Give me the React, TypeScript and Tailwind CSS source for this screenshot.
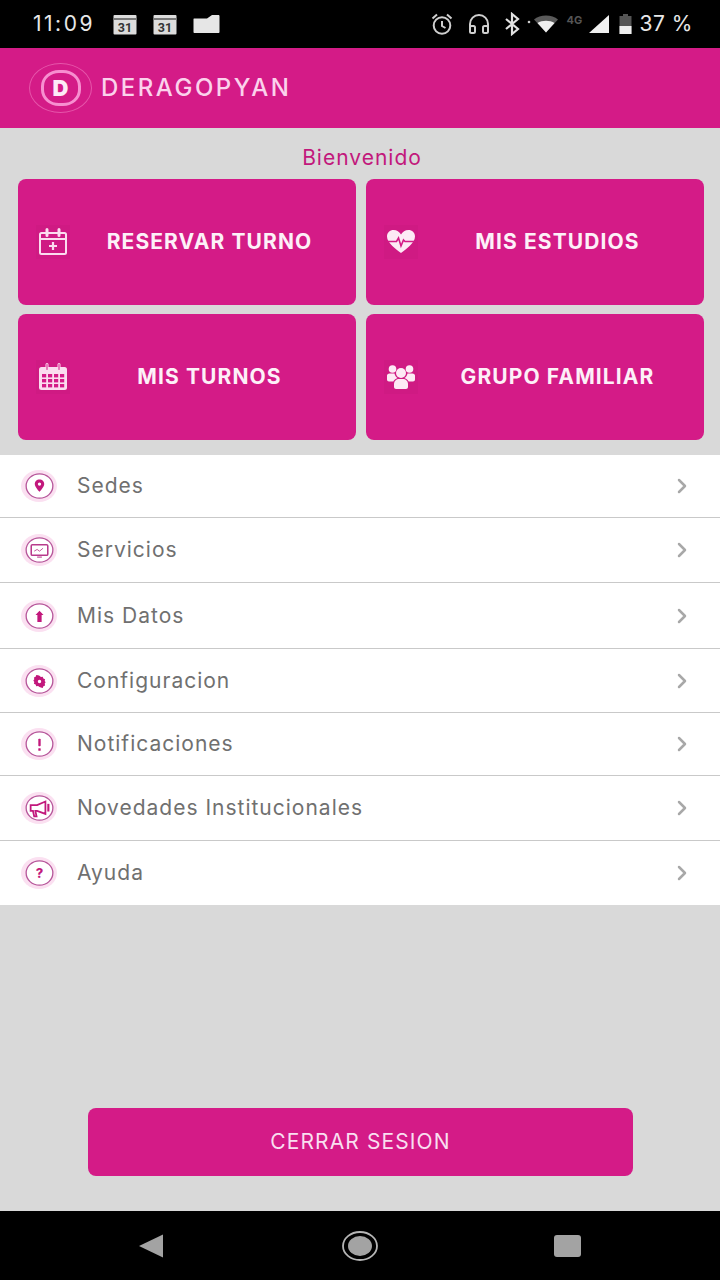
import type { ReactNode } from "react";
import { ChevronRight } from "lucide-react";

const PINK = "#d41b87";

function CalendarPlus() {
  return (
    <svg width="30" height="28" viewBox="0 0 30 28" fill="none" stroke="#fbdcef" strokeWidth="2">
      <rect x="2" y="5" width="26" height="21" rx="1.5" />
      <path d="M2 11h26" />
      <path d="M9 1.500v6M21 1.500v6" strokeWidth="3" strokeLinecap="round" />
      <path d="M15 14v8M11 18h8" strokeWidth="2.2" />
    </svg>
  );
}

function CalendarGrid() {
  return (
    <svg width="30" height="28" viewBox="0 0 30 28" fill="none">
      <rect x="1" y="4" width="28" height="23" rx="2.5" fill="#fbdcef" />
      <path d="M9 1.500v5M21 1.500v5" stroke="#fbdcef" strokeWidth="3" strokeLinecap="round" />
      <path d="M9 1.500v5M21 1.500v5" stroke={PINK} strokeWidth="1" strokeLinecap="round" />
      <g fill={PINK}>
        {[11, 16, 21].map((y) =>
          [4, 10, 16, 22].map((x) => <rect key={`${x}-${y}`} x={x} y={y} width="4.2" height="3.4" />),
        )}
      </g>
    </svg>
  );
}

function HeartPulse() {
  return (
    <svg width="30" height="26" viewBox="0 0 30 26">
      <path
        d="M15 24C10 20 1 14 1 7.500 1 3.500 4 1 7.500 1 10.800 1 13.500 3 15 5.500 16.500 3 19.200 1 22.500 1 26 1 29 3.500 29 7.500 29 14 20 20 15 24Z"
        fill="#fdeaf5"
      />
      <path d="M1 12.500h9.500l2-3.500 2.500 8 2.500-6 1.500 1.500H29" fill="none" stroke={PINK} strokeWidth="1.600" />
    </svg>
  );
}

function Group() {
  return (
    <svg width="30" height="26" viewBox="0 0 30 26" fill="#fdeaf5">
      <circle cx="6.500" cy="5" r="3.800" />
      <circle cx="23.500" cy="5" r="3.800" />
      <circle cx="15" cy="9" r="5" />
      <path d="M1 11.500c0-1 1-2 2.500-2h5c.5 2 1.500 3.500 3 4.500-2 .8-3.500 2-4.200 3.500H3c-1.200 0-2-.8-2-2Z" />
      <path d="M29 11.500c0-1-1-2-2.500-2h-5c-.5 2-1.500 3.500-3 4.500 2 .8 3.500 2 4.200 3.500H27c1.200 0 2-.8 2-2Z" />
      <path d="M8 20c0-3 2.500-5 5-5h4c2.500 0 5 2 5 5v3c0 1-1 2-2 2H10c-1 0-2-1-2-2Z" />
    </svg>
  );
}

function ActionButton({ icon, label }: { icon: ReactNode; label: string }) {
  return (
    <div className="relative flex h-[126px] items-center justify-center rounded-lg bg-[#d41b87] pl-[45px]">
      <span className="absolute left-[18px] flex h-[34px] w-[34px] items-center justify-center bg-[#cf1a83]">{icon}</span>
      <span className="text-[21px] font-bold tracking-[1.100px] text-[#fdf0f8]">{label}</span>
    </div>
  );
}

const itemIcons: Record<string, ReactNode> = {
  sedes: (
    <path d="M12 5.500c-2.400 0-4 1.800-4 3.900 0 2.600 4 6.600 4 6.600s4-4 4-6.600c0-2.100-1.600-3.900-4-3.900Zm0 5.300a1.400 1.400 0 1 1 0-2.800 1.400 1.400 0 0 1 0 2.800Z" fill="#c2187c" fillRule="evenodd" />
  ),
  servicios: (
    <g fill="none" stroke="#b83a8c">
      <rect x="5" y="6.500" width="14" height="9" rx="1" strokeWidth="1.300" />
      <path d="M7.500 12l2.500-1.500 2 1.500 3-2.500" strokeWidth="0.700" />
      <path d="M10 17h4" strokeWidth="0.900" />
    </g>
  ),
  datos: <path d="M12 6.500l3.400 3.700h-1.600V16h-3.600v-5.800H8.600Z" fill="#c2187c" />,
  config: (
    <path d="M12 6.200l1.500 1.200 1.900-.3.700 1.800 1.800.8-.4 1.900 1 1.400-1 1.400.4 1.900-1.800.8-.7 1.800-1.900-.3L12 18l-1.500-1.200-1.900.3-.7-1.800-1.800-.8.4-1.900-1-1.400 1-1.400-.4-1.900 1.800-.8.7-1.800 1.900.3Zm0 4.100a1.800 1.800 0 1 0 0 3.600 1.800 1.800 0 0 0 0-3.600Z" fill="#c2187c" fillRule="evenodd" transform="translate(2.400 1.700) scale(0.8)" />
  ),
  notif: (
    <g fill="#c2187c">
      <rect x="11" y="6.500" width="2" height="6.500" rx="0.700" />
      <rect x="11" y="14.500" width="2" height="2.200" rx="0.500" />
    </g>
  ),
  novedades: (
    <g fill="none" stroke="#c2187c" strokeWidth="1.500">
      <path d="M4.500 8.500h5.500L17 5.500v10.500l-7-2.500H8.500l1 4.500H7.500l-1-4.500h-2Z" />
      <path d="M19.500 7.500v6.500" strokeWidth="1.800" />
    </g>
  ),
  ayuda: (
    <text x="12" y="15.500" textAnchor="middle" fontSize="11" fontWeight="800" fill="#c2187c" fontFamily="Inter, sans-serif">?</text>
  ),
};

function ItemIcon({ name }: { name: string }) {
  return (
    <div className="flex h-[32px] w-[36px] items-center justify-center rounded-[50%] bg-[#fbe0f1]">
      <svg width="29" height="26" viewBox="0 0 24 22" className="overflow-visible">
        <ellipse cx="12" cy="11" rx="11.300" ry="10.300" fill="#fff" stroke="#b6569a" strokeWidth="1.100" />
        {itemIcons[name]}
      </svg>
    </div>
  );
}

const rows = [
  { key: "sedes", label: "Sedes", h: "h-[63px]" },
  { key: "servicios", label: "Servicios", h: "h-[65px]" },
  { key: "datos", label: "Mis Datos", h: "h-[66px]" },
  { key: "config", label: "Configuracion", h: "h-[64px]" },
  { key: "notif", label: "Notificaciones", h: "h-[63px]" },
  { key: "novedades", label: "Novedades Institucionales", h: "h-[65px]" },
  { key: "ayuda", label: "Ayuda", h: "h-[64px]" },
];

function StatusBar() {
  return (
    <div className="flex h-12 items-center bg-black pl-[33px] pr-[27px] text-[#e8e8e8]">
      <span className="text-[21px] tracking-[2.500px]">11:09</span>
      <div className="ml-[18px] flex items-center gap-[16px]">
        {[0, 1].map((i) => (
          <svg key={i} width="24" height="21" viewBox="0 0 24 21">
            <rect x="0.500" y="1" width="23" height="19.500" rx="1" fill="#dcdcdc" />
            <rect x="0.500" y="4" width="23" height="2" fill="#777" />
            <text x="12" y="18" textAnchor="middle" fontSize="12.500" fontWeight="700" fill="#333" fontFamily="Roboto, sans-serif">31</text>
          </svg>
        ))}
        <svg width="27" height="20" viewBox="0 0 27 20">
          <path d="M1 4.500h13L19 1h6.500c.5 0 1 .5 1 1v16c0 .6-.5 1-1 1H1.500c-.5 0-1-.4-1-1V5c0-.3.2-.5.5-.5Z" fill="#e6e6e6" />
        </svg>
      </div>
      <div className="ml-auto flex items-center">
        <svg width="24" height="24" viewBox="0 0 24 24" fill="none" stroke="#cfcfcf" strokeWidth="2">
          <circle cx="12" cy="13.500" r="8.300" />
          <path d="M12 9v5l3.500 2M2.500 6.500 7 2.500M21.500 6.500 17 2.500" />
        </svg>
        <svg className="ml-[14px]" width="22" height="22" viewBox="0 0 22 22" fill="none" stroke="#cfcfcf" strokeWidth="2">
          <path d="M2 19v-8a9 9 0 0 1 18 0v8" />
          <rect x="2" y="13" width="5" height="7" rx="1.500" />
          <rect x="15" y="13" width="5" height="7" rx="1.500" />
        </svg>
        <svg className="ml-[14px]" width="16" height="24" viewBox="0 0 16 24" fill="none" stroke="#e2e2e2" strokeWidth="2.200">
          <path d="M2 7l12 10-6 5V2l6 5L2 17" />
        </svg>
        <svg className="ml-[7px]" width="32" height="20" viewBox="0 0 32 20">
          <circle cx="2" cy="8" r="1.300" fill="#ccc" />
          <path d="M7 5.500C13 0 25 0 31 5.500L19 18.500Z" fill="#5a5a5a" />
          <path d="M10.500 9C15 6 23 6 27.500 9L19 18.500Z" fill="#efefef" />
        </svg>
        <span className="ml-[8px] mt-[-8px] w-[18px] text-[11px] font-bold leading-none text-[#555]">4G</span>
        <svg className="ml-[3px]" width="22" height="20" viewBox="0 0 22 20">
          <path d="M21 1v18H1Z" fill="#f0f0f0" />
        </svg>
        <svg className="ml-[9px]" width="13" height="22" viewBox="0 0 13 22">
          <path d="M4 1h5v2h3.500v18H.5V3H4Z" fill="#555" />
          <rect x="0.500" y="13" width="12" height="8" fill="#eee" />
        </svg>
        <span className="ml-[8px] text-[21px] tracking-[0.5px]">37 %</span>
      </div>
    </div>
  );
}

export default function App() {
  return (
    <div className="flex h-[1280px] w-[720px] flex-col bg-[#d9d9d9] font-['Inter',sans-serif]">
      <StatusBar />

      <div className="flex h-20 items-center bg-[#d41b87] pl-[29px]">
        <div className="flex h-[50px] w-[63px] items-center justify-center rounded-[50%] border border-[#e655aa]">
          <div className="flex h-[36px] w-[40px] items-center justify-center rounded-[45%] border-[3px] border-[#f78fd0]">
            <span className="text-[22px] font-black leading-none text-[#fdeaf7]">D</span>
          </div>
        </div>
        <span className="ml-[9px] text-[24px] font-medium leading-none tracking-[2.500px] text-[#fbd2ec]">DERAGOPYAN</span>
      </div>

      <p className="mt-[18px] pl-[4px] text-center text-[21px] leading-6 tracking-[1px] text-[#c2187c]">Bienvenido</p>

      <div className="mt-[9px] grid grid-cols-2 gap-x-[10px] gap-y-[9px] pl-[18px] pr-[16px]">
        <ActionButton icon={<CalendarPlus />} label="RESERVAR TURNO" />
        <ActionButton icon={<HeartPulse />} label="MIS ESTUDIOS" />
        <ActionButton icon={<CalendarGrid />} label="MIS TURNOS" />
        <ActionButton icon={<Group />} label="GRUPO FAMILIAR" />
      </div>

      <div className="mt-[15px] bg-white">
        {rows.map((r, i) => (
          <div
            key={r.key}
            className={`flex items-center pl-[21px] pr-[26px] ${r.h} ${i < rows.length - 1 ? "border-b border-[#c9c9c9]" : ""}`}
          >
            <ItemIcon name={r.key} />
            <span className="ml-[20px] text-[21px] tracking-[1px] text-[#707070]">{r.label}</span>
            <ChevronRight className="ml-auto text-[#a8a8a8]" size={24} strokeWidth={2.5} />
          </div>
        ))}
      </div>

      <div className="flex flex-1 items-end justify-start pb-[35px] pl-[88px]">
        <div className="flex h-[68px] w-[545px] items-center justify-center rounded-lg bg-[#d41b87] text-[21px] tracking-[1.100px] text-[#f9dff0]">
          CERRAR SESION
        </div>
      </div>

      <div className="flex h-[69px] items-center bg-black">
        <svg className="ml-[138px]" width="26" height="26" viewBox="0 0 26 26">
          <path d="M25 1.500v23L1 13Z" fill="#a3a3a3" />
        </svg>
        <svg className="ml-[177px]" width="38" height="32" viewBox="0 0 38 32">
          <ellipse cx="19" cy="16" rx="17" ry="14" fill="none" stroke="#b5b5b5" strokeWidth="1.800" />
          <ellipse cx="19" cy="16" rx="12" ry="10" fill="#a3a3a3" />
        </svg>
        <div className="ml-[175px] h-[22px] w-[27px] rounded-[3px] bg-[#a3a3a3]" />
      </div>
    </div>
  );
}
